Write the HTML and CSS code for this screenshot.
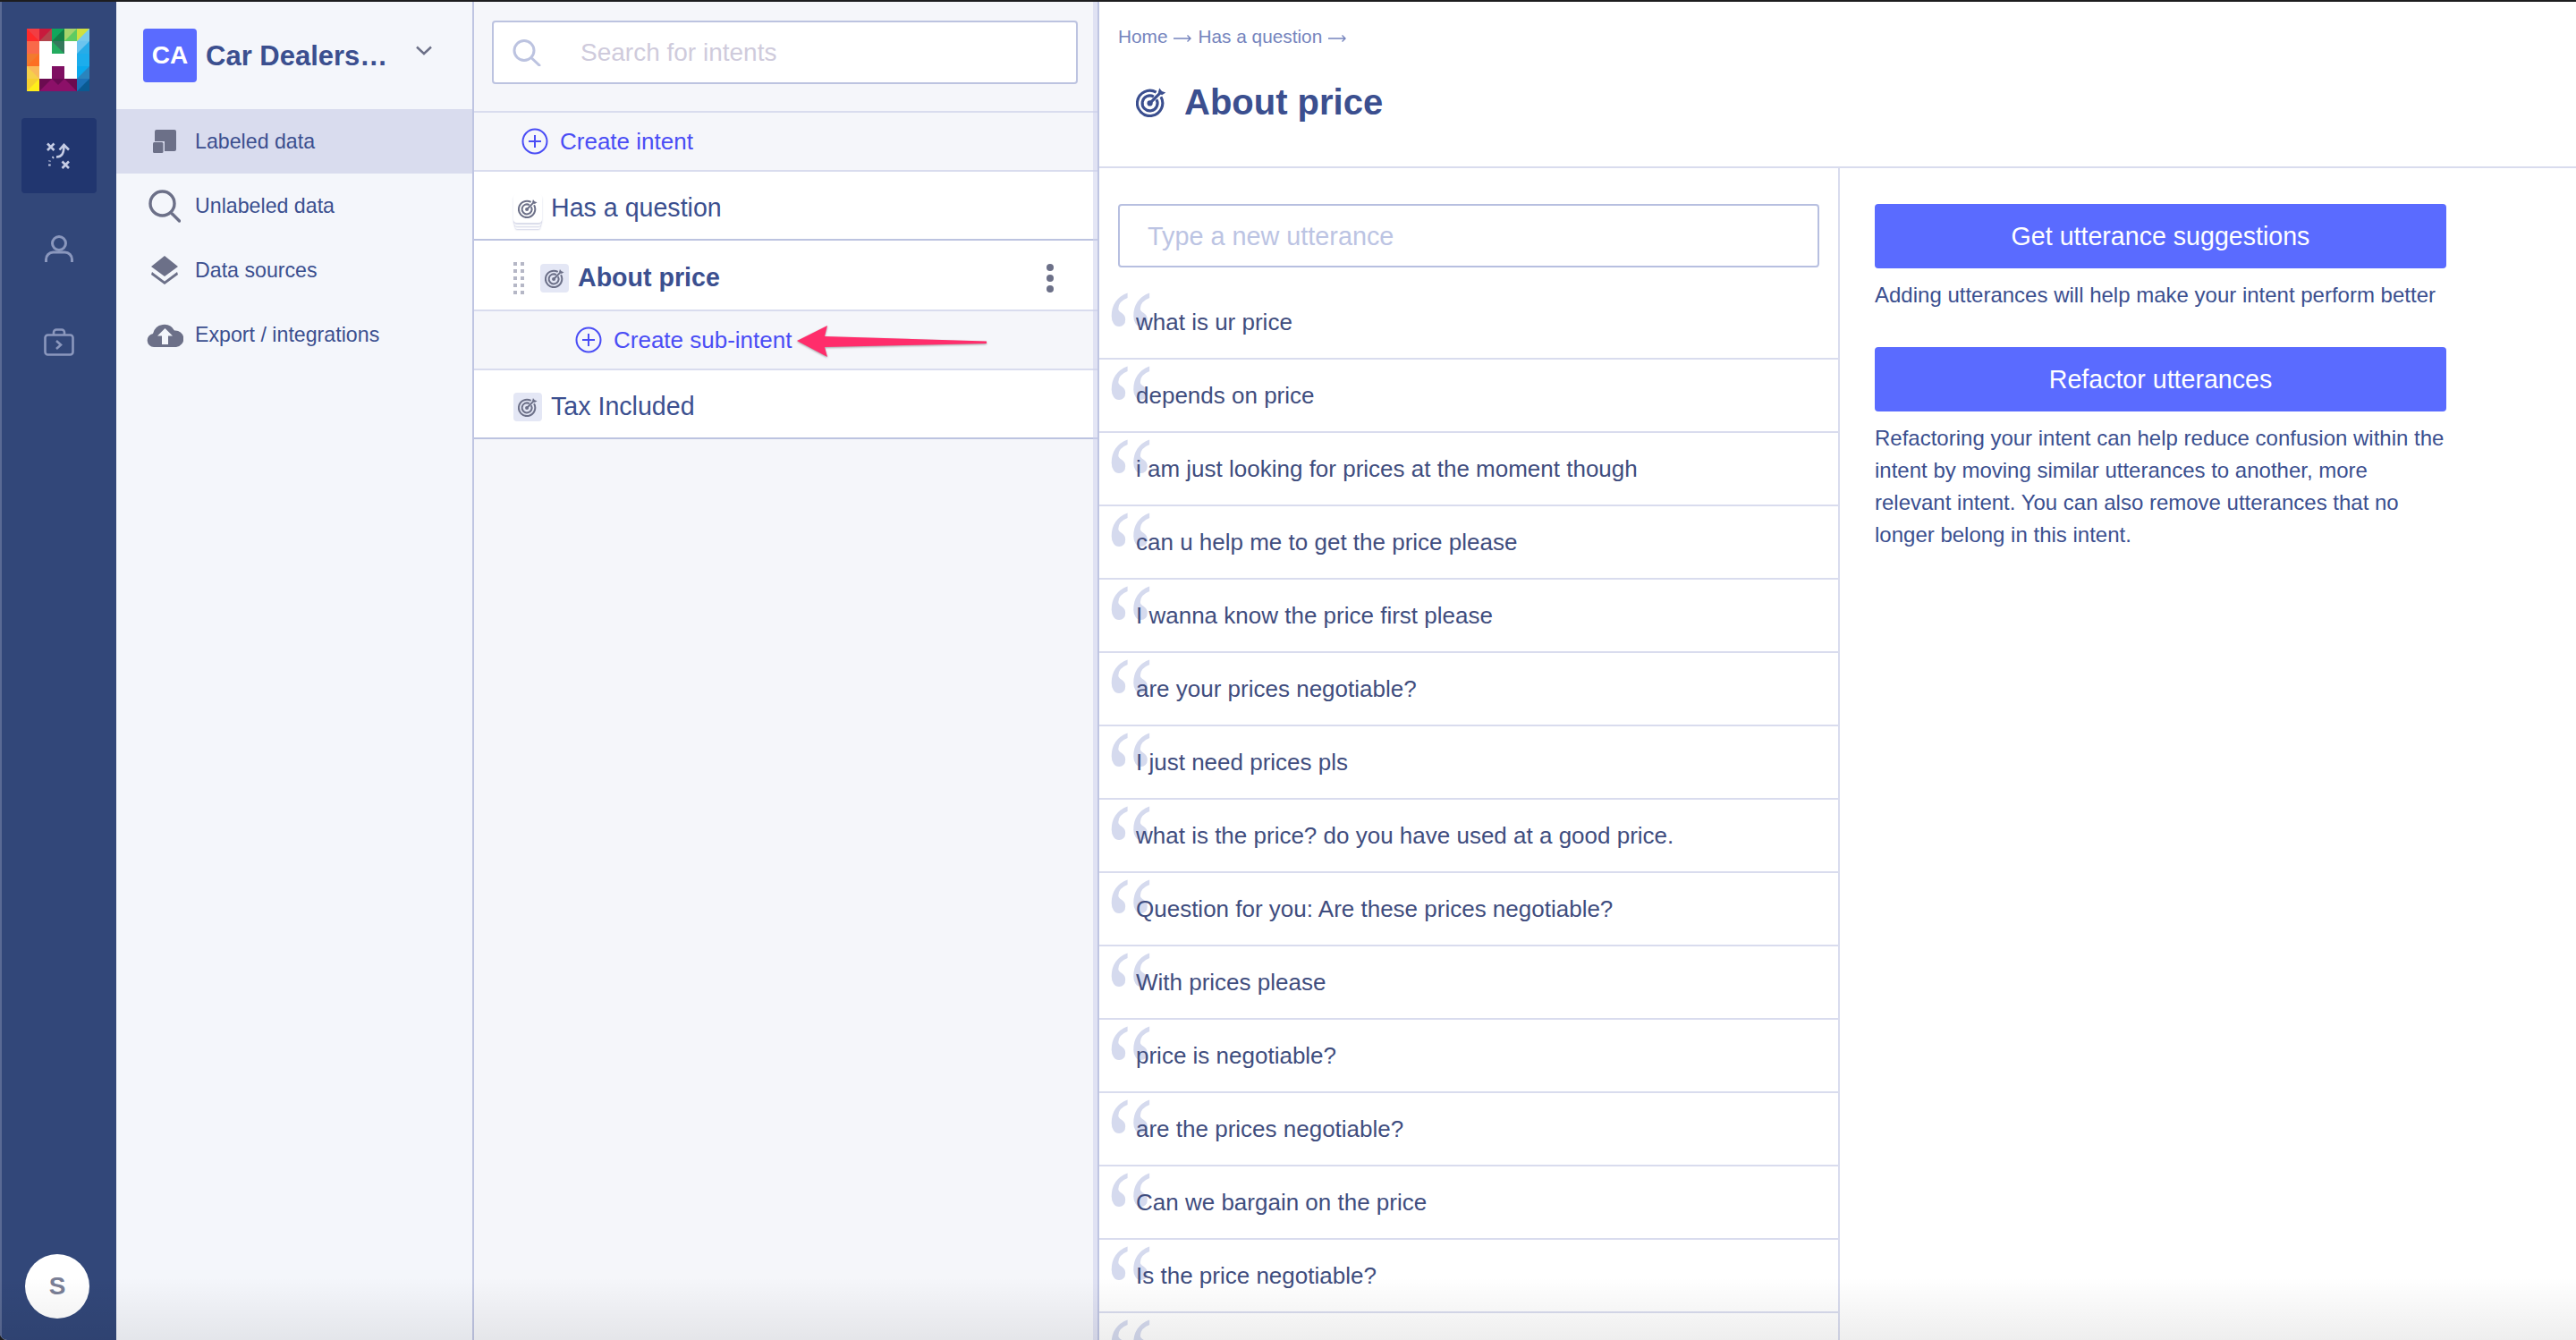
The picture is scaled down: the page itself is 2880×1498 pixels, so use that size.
FILE: index.html
```html
<!DOCTYPE html>
<html lang="en">

<head>
    <meta charset="UTF-8">
    <meta name="viewport" content="width=device-width, initial-scale=1.0">
    <title>About price</title>
    <link rel="stylesheet" href="styles.css">
</head>

<body>
    <svg class="defs" width="0" height="0">
        <symbol id="target" viewBox="0 0 24 24">
            <g fill="none" stroke="currentColor" stroke-width="2.2">
                <path d="M16 4.3A10 10 0 1 0 19.7 8" />
                <path d="M14 7.8A6 6 0 1 0 16.2 10" />
                <path d="M11 13L19.5 4.5" />
            </g>
            <circle cx="11" cy="13" r="2.2" fill="currentColor" />
            <path d="M17.5 4.5L18.5 1L20.5 3.5L23.5 4.5L20.5 6.5Z" fill="currentColor" />
        </symbol>
        <symbol id="plus" viewBox="0 0 30 30">
            <circle cx="15" cy="15" r="13.5" fill="none" stroke="currentColor" stroke-width="2" />
            <path d="M15 8V22M8 15H22" fill="none" stroke="currentColor" stroke-width="2" />
        </symbol>
        <symbol id="crumb-arrow" viewBox="0 0 20 10">
            <path d="M0 5H19M15.500 1.500L19 5L15.500 8.500" fill="none" stroke="currentColor" stroke-width="1.400" />
        </symbol>
    </svg>

    <div class="app">
        <nav class="rail">
            <svg class="logo" width="70" height="70" viewBox="0 0 70 70">
                <rect width="70" height="70" fill="#fff" />
                <rect width="14" height="14" fill="#f23d43" />
                <path d="M0 0L14 14H0Z" fill="#fe2a2a" />
                <rect x="14" width="14" height="14" fill="#c81a3c" />
                <path d="M14 14L28 0V14Z" fill="#b3444c" />
                <rect x="28" width="14" height="14" fill="#10a65c" />
                <path d="M28 14L42 0V14Z" fill="#137f47" />
                <rect x="42" width="14" height="14" fill="#a6d46c" />
                <path d="M42 14L56 0V14Z" fill="#5ecb62" />
                <rect x="56" width="14" height="14" fill="#cfe040" />
                <path d="M56 14L70 0V14Z" fill="#77caec" />
                <rect y="14" width="14" height="14" fill="#f9694a" />
                <rect x="28" y="14" width="14" height="14" fill="#24ab5f" />
                <path d="M28 14H42V28Z" fill="#35785c" />
                <rect x="56" y="14" width="14" height="14" fill="#27ace8" />
                <path d="M56 28L70 14H56Z" fill="#6cc4ee" />
                <rect y="28" width="14" height="14" fill="#f27a2e" />
                <path d="M0 42L14 28V42Z" fill="#fc6f23" />
                <rect x="56" y="28" width="14" height="14" fill="#1cadec" />
                <rect y="42" width="14" height="14" fill="#f9b95a" />
                <path d="M0 42L14 56H0Z" fill="#f6d04a" />
                <rect x="28" y="42" width="14" height="14" fill="#7f0f62" />
                <rect x="56" y="42" width="14" height="14" fill="#0ba8ec" />
                <path d="M56 56L70 42V56Z" fill="#2a84bd" />
                <rect y="56" width="14" height="14" fill="#f6d030" />
                <path d="M0 70L14 56V70Z" fill="#ffee1a" />
                <rect x="14" y="56" width="14" height="14" fill="#6b0b50" />
                <path d="M14 70L28 56V70Z" fill="#8c1068" />
                <rect x="28" y="56" width="14" height="14" fill="#8c1068" />
                <path d="M28 56H42L35 63Z" fill="#6a0a52" />
                <rect x="42" y="56" width="14" height="14" fill="#6b0b50" />
                <path d="M42 56V70H56Z" fill="#8c1068" />
                <rect x="56" y="56" width="14" height="14" fill="#1c72b8" />
                <path d="M56 70L70 56V70Z" fill="#0a5a92" />
            </svg>
            <a class="rail-item rail-active">
                <svg class="tactic" width="27" height="30" viewBox="0 0 27 30" fill="none" stroke="#c5cce4" stroke-width="2.6">
                    <path d="M1 1.5L8.5 9M8.5 1.5L1 9" />
                    <path d="M17.5 21.5L25 29M25 21.5L17.5 29" />
                    <path d="M11 16.5C17 16.5 19.5 13 19.5 3" />
                    <path d="M14.5 8.5L19.5 3L25 8.5" />
                    <path d="M6.5 17.5L8 16.6M3.4 21.5L3.6 20.5M3.4 26.5V24.5" />
                </svg>
            </a>
            <a class="rail-item">
                <svg width="32" height="30" viewBox="0 0 32 30" fill="none" stroke="#8a97bd" stroke-width="3">
                    <circle cx="16" cy="9" r="7.5" />
                    <path d="M1.5 30V27A8 8 0 0 1 9.5 19H22.5A8 8 0 0 1 30.500 27V30" />
                </svg>
            </a>
            <a class="rail-item">
                <svg width="34" height="31" viewBox="0 0 34 31" fill="none" stroke="#8a97bd" stroke-width="2.6">
                    <rect x="1.500" y="7.500" width="31" height="22" rx="3" />
                    <path d="M11 7V4.500A3 3 0 0 1 14 1.500H20A3 3 0 0 1 23 4.500V7" />
                    <path d="M14 14L19 18.500L14 23" />
                </svg>
            </a>
            <div class="avatar">S</div>
        </nav>

        <aside class="sidebar">
            <div class="project">
                <span class="project-badge">CA</span>
                <span class="project-name">Car Dealers…</span>
                <svg class="project-caret" width="18" height="11" viewBox="0 0 18 11" fill="none" stroke="#6c7088" stroke-width="2.4">
                    <path d="M1 1.500L9 9L17 1.500" />
                </svg>
            </div>
            <a class="side-item side-active">
                <span class="side-icon">
                    <svg width="26" height="26" viewBox="0 0 26 26" fill="#6c7088">
                        <path d="M4 0H24A2 2 0 0 1 26 2V22A2 2 0 0 1 24 24H13V13H2V2A2 2 0 0 1 4 0Z" />
                        <rect y="14" width="11.500" height="12" rx="1.500" />
                    </svg>
                </span>
                Labeled data
            </a>
            <a class="side-item">
                <span class="side-icon">
                    <svg width="36" height="37" viewBox="0 0 36 37" fill="none" stroke="#6c7088">
                        <circle cx="15.500" cy="15.500" r="13.500" stroke-width="3.400" />
                        <path d="M26.500 27L34.500 35" stroke-width="3.400" stroke-linecap="round" />
                    </svg>
                </span>
                Unlabeled data
            </a>
            <a class="side-item">
                <span class="side-icon">
                    <svg width="30" height="32" viewBox="0 0 30 32" fill="#6c7088">
                        <path d="M15 0L30 12L15 23L0 12Z" />
                        <path d="M1 18L15 28.500L29 18L30 21L15 32L0 21Z" />
                    </svg>
                </span>
                Data sources
            </a>
            <a class="side-item">
                <span class="side-icon">
                    <svg width="41" height="28" viewBox="0 0 41 28">
                        <path fill="#6c7088" d="M8 28A7.500 7.500 0 0 1 7 13.100A13 13 0 0 1 31 9.500A9.300 9.300 0 0 1 33 28Z" />
                        <path fill="#f4f6fb" d="M20.500 7L29 15.500H24V25H17V15.500H12Z" />
                    </svg>
                </span>
                Export / integrations
            </a>
        </aside>

        <section class="intents">
            <div class="intent-search">
                <div class="search-box">
                    <svg width="32" height="30" viewBox="0 0 32 30" fill="none" stroke="#bcc3e0" stroke-width="3">
                        <circle cx="13" cy="12.500" r="11" />
                        <path d="M22 21.500L30 29" stroke-linecap="round" />
                    </svg>
                    <span>Search for intents</span>
                </div>
            </div>
            <a class="create-row create-top">
                <svg class="plus"><use href="#plus" /></svg>
                Create intent
            </a>
            <div class="intent-row intent-end">
                <span class="intent-icon intent-stack"><svg><use href="#target" /></svg></span>
                <span>Has a question</span>
            </div>
            <div class="intent-row intent-selected">
                <svg class="grip" width="12" height="36" viewBox="0 0 12 36" fill="#b5b7c6">
                    <rect width="4" height="4" /><rect x="8" width="4" height="4" />
                    <rect y="8" width="4" height="4" /><rect x="8" y="8" width="4" height="4" />
                    <rect y="16" width="4" height="4" /><rect x="8" y="16" width="4" height="4" />
                    <rect y="24" width="4" height="4" /><rect x="8" y="24" width="4" height="4" />
                    <rect y="32" width="4" height="4" /><rect x="8" y="32" width="4" height="4" />
                </svg>
                <span class="intent-icon"><svg><use href="#target" /></svg></span>
                <strong>About price</strong>
                <span class="more"><i></i><i></i><i></i></span>
            </div>
            <a class="create-row create-sub">
                <svg class="plus"><use href="#plus" /></svg>
                Create sub-intent
                <svg class="callout" width="216" height="40" viewBox="0 0 216 40">
                    <path d="M2 18L36 1L33 13L214 18.500V21L33 25L36 36Z" fill="#ff2d6b" />
                </svg>
            </a>
            <div class="intent-row intent-end">
                <span class="intent-icon"><svg><use href="#target" /></svg></span>
                <span>Tax Included</span>
            </div>
            <div class="resizer"></div>
        </section>

        <main class="main">
            <header class="page-head">
                <div class="crumbs">
                    <span>Home</span>
                    <svg><use href="#crumb-arrow" /></svg>
                    <span>Has a question</span>
                    <svg><use href="#crumb-arrow" /></svg>
                </div>
                <h1 class="page-title"><svg><use href="#target" /></svg>About price</h1>
            </header>
            <div class="page-body">
                <section class="utterances">
                    <div class="new-utterance">Type a new utterance</div>
                    <ul class="utterance-list">
                        <li>what is ur price</li>
                        <li>depends on price</li>
                        <li>i am just looking for prices at the moment though</li>
                        <li>can u help me to get the price please</li>
                        <li>I wanna know the price first please</li>
                        <li>are your prices negotiable?</li>
                        <li>I just need prices pls</li>
                        <li>what is the price? do you have used at a good price.</li>
                        <li>Question for you: Are these prices negotiable?</li>
                        <li>With prices please</li>
                        <li>price is negotiable?</li>
                        <li>are the prices negotiable?</li>
                        <li>Can we bargain on the price</li>
                        <li>Is the price negotiable?</li>
                        <li>Would it be possible</li>
                    </ul>
                </section>
                <section class="tools">
                    <button class="tool-btn">Get utterance suggestions</button>
                    <p class="tool-help">Adding utterances will help make your intent perform better</p>
                    <button class="tool-btn">Refactor utterances</button>
                    <p class="tool-help">Refactoring your intent can help reduce confusion within the intent by moving similar utterances to another, more relevant intent. You can also remove utterances that no longer belong in this intent.</p>
                </section>
            </div>
        </main>
        <div class="bottom-shade"></div>
    </div>
</body>

</html>
```

FILE: styles.css
```css
* {
    padding: 0;
    margin: 0;
    box-sizing: border-box;
}

html,
body {
    height: 100%;
    overflow: hidden;
    background: #1d1d1f;
}

body {
    padding-top: 2px;
    font-family: "Liberation Sans", Arial, sans-serif;
    color: #3b4f8f;
}

.defs {
    position: absolute;
}

.app {
    position: relative;
    display: flex;
    height: 1496px;
    background: #fff;
    border-bottom-left-radius: 8px;
    overflow: hidden;
}

/* left rail */
.rail {
    display: flex;
    flex-direction: column;
    align-items: center;
    gap: 20px;
    flex: none;
    width: 130px;
    padding-top: 30px;
    background: #324779;
    border-left: 2px solid #5a6a94;
}

.logo {
    margin: 0 2px 10px 0;
}

.rail-item {
    display: flex;
    align-items: center;
    justify-content: center;
    width: 84px;
    height: 84px;
    border-radius: 4px;
}

.rail-active {
    background: #21366f;
}

.tactic {
    margin-right: 2px;
}

.avatar {
    display: flex;
    align-items: center;
    justify-content: center;
    width: 72px;
    height: 72px;
    margin: auto 4px 24px 0;
    border-radius: 50%;
    background: #fff;
    color: #7a7f96;
    font-size: 28px;
    font-weight: bold;
}

/* project sidebar */
.sidebar {
    flex: none;
    width: 400px;
    background: #f4f6fb;
    border-right: 2px solid #bfc5e2;
}

.project {
    display: flex;
    align-items: center;
    height: 120px;
    padding: 30px 0 30px 30px;
}

.project-badge {
    display: flex;
    align-items: center;
    justify-content: center;
    width: 60px;
    height: 60px;
    border-radius: 4px;
    background: #5a6bff;
    color: #fff;
    font-size: 28px;
    font-weight: bold;
}

.project-name {
    margin: 2px 0 0 10px;
    font-size: 31px;
    font-weight: bold;
    white-space: nowrap;
}

.project-caret {
    margin: 0 0 12px 32px;
}

.side-item {
    display: flex;
    align-items: center;
    height: 72px;
    padding-left: 33px;
    font-size: 23.200px;
}

.side-active {
    background: #d9dcee;
}

.side-icon {
    display: flex;
    align-items: center;
    justify-content: center;
    width: 42px;
    margin-right: 13px;
}

/* intents column */
.intents {
    position: relative;
    flex: none;
    width: 699px;
    background: #f5f6fa;
}

.resizer {
    position: absolute;
    top: 0;
    right: 0;
    bottom: 0;
    width: 7px;
    background: rgba(205, 210, 236, 0.55);
    border-right: 2px solid #bfc5e2;
}

.intent-search {
    height: 124px;
    padding: 21px 24px 0 20px;
    border-bottom: 2px solid #d9dcee;
}

.search-box {
    display: flex;
    align-items: center;
    height: 71px;
    padding-left: 21px;
    border: 2px solid #bcc3e0;
    border-radius: 4px;
    background: #fff;
    color: #cfcbdc;
    font-size: 28px;
}

.search-box span {
    margin-left: 44px;
}

.create-row {
    display: flex;
    align-items: center;
    position: relative;
    height: 66px;
    border-bottom: 2px solid #d9dcee;
    color: #4a4df5;
    font-size: 26px;
}

.create-top {
    padding-left: 53px;
}

.create-sub {
    padding-left: 113px;
}

.plus {
    width: 30px;
    height: 30px;
    margin-right: 13px;
}

.callout {
    position: absolute;
    left: 359px;
    top: 15px;
    filter: drop-shadow(0 1px 1px rgba(0, 0, 0, 0.35));
}

.intent-row {
    display: flex;
    align-items: center;
    height: 77px;
    padding: 6px 0 0 44px;
    border-bottom: 2px solid #d9dcee;
    background: #fff;
    font-size: 28.600px;
}

.intent-end {
    border-bottom-color: #bcc3e0;
}

.intent-selected {
    height: 79px;
}

.grip {
    margin-right: 18px;
}

.intent-icon {
    display: flex;
    align-items: center;
    justify-content: center;
    width: 32px;
    height: 32px;
    margin: 1px 10px 0 0;
    border-radius: 4px;
    background: #e4e7f5;
    color: #6c7088;
}

.intent-icon svg {
    width: 22px;
    height: 22px;
}

.intent-stack {
    background: #fff;
    box-shadow: 0 2px 2px rgba(120, 130, 180, 0.3), 0 5px 0 -1px #fff, 0 6px 2px -1px rgba(120, 130, 180, 0.35), 0 9px 0 -2px #fff, 0 10px 2px -2px rgba(120, 130, 180, 0.35);
}

.more {
    display: flex;
    flex-direction: column;
    gap: 4px;
    margin-left: auto;
    margin-right: 51px;
}

.more i {
    display: block;
    width: 8px;
    height: 8px;
    border-radius: 50%;
    background: #6c7088;
}

/* main area */
.main {
    flex: 1;
    display: flex;
    flex-direction: column;
    min-width: 0;
}

.page-head {
    flex: none;
    height: 186px;
    padding: 27px 0 0 21px;
    border-bottom: 2px solid #d9dcee;
}

.crumbs {
    display: flex;
    align-items: center;
    gap: 7px;
    color: #7584bd;
    font-size: 20.800px;
    line-height: 24px;
}

.crumbs svg {
    width: 20px;
    height: 10px;
    margin-top: 3px;
}

.page-title {
    display: flex;
    align-items: center;
    height: 48px;
    margin: 37px 0 0 20px;
    font-size: 40px;
}

.page-title svg {
    width: 34px;
    height: 34px;
    margin-right: 20px;
}

.page-body {
    flex: 1;
    display: flex;
    min-height: 0;
}

.utterances {
    flex: none;
    width: 828px;
    padding-top: 40px;
    border-right: 2px solid #d9dcee;
}

.new-utterance {
    display: flex;
    align-items: center;
    width: 784px;
    height: 71px;
    margin-left: 21px;
    padding: 1px 0 0 31px;
    border: 2px solid #b7bfe0;
    border-radius: 4px;
    color: #bcc4e3;
    font-size: 28.800px;
}

.utterance-list {
    position: relative;
    z-index: 0;
    margin-top: 21px;
    list-style: none;
}

.utterance-list li {
    position: relative;
    display: flex;
    align-items: center;
    height: 82px;
    padding-left: 41px;
    border-bottom: 2px solid #d9dcee;
    color: #3f4d7e;
    font-size: 26px;
}

.utterance-list li::before {
    content: "\201C";
    position: absolute;
    left: 8px;
    top: -9px;
    z-index: -1;
    color: #d5daee;
    font-family: "Liberation Serif", serif;
    font-size: 146px;
    line-height: 130px;
    transform: scaleX(0.82);
    transform-origin: left top;
}

.tools {
    width: 678px;
    padding: 40px 0 0 39px;
}

.tool-btn {
    display: block;
    width: 639px;
    height: 72px;
    border: 0;
    border-radius: 4px;
    background: #5a6bff;
    color: #fff;
    font-family: inherit;
    font-size: 28.600px;
}

.tool-help {
    margin: 12px 0 40px;
    font-size: 24px;
    line-height: 36px;
}

.bottom-shade {
    position: absolute;
    left: 0;
    right: 0;
    bottom: 0;
    height: 70px;
    background: linear-gradient(rgba(0, 0, 0, 0), rgba(0, 0, 0, 0.065));
    pointer-events: none;
}
```
